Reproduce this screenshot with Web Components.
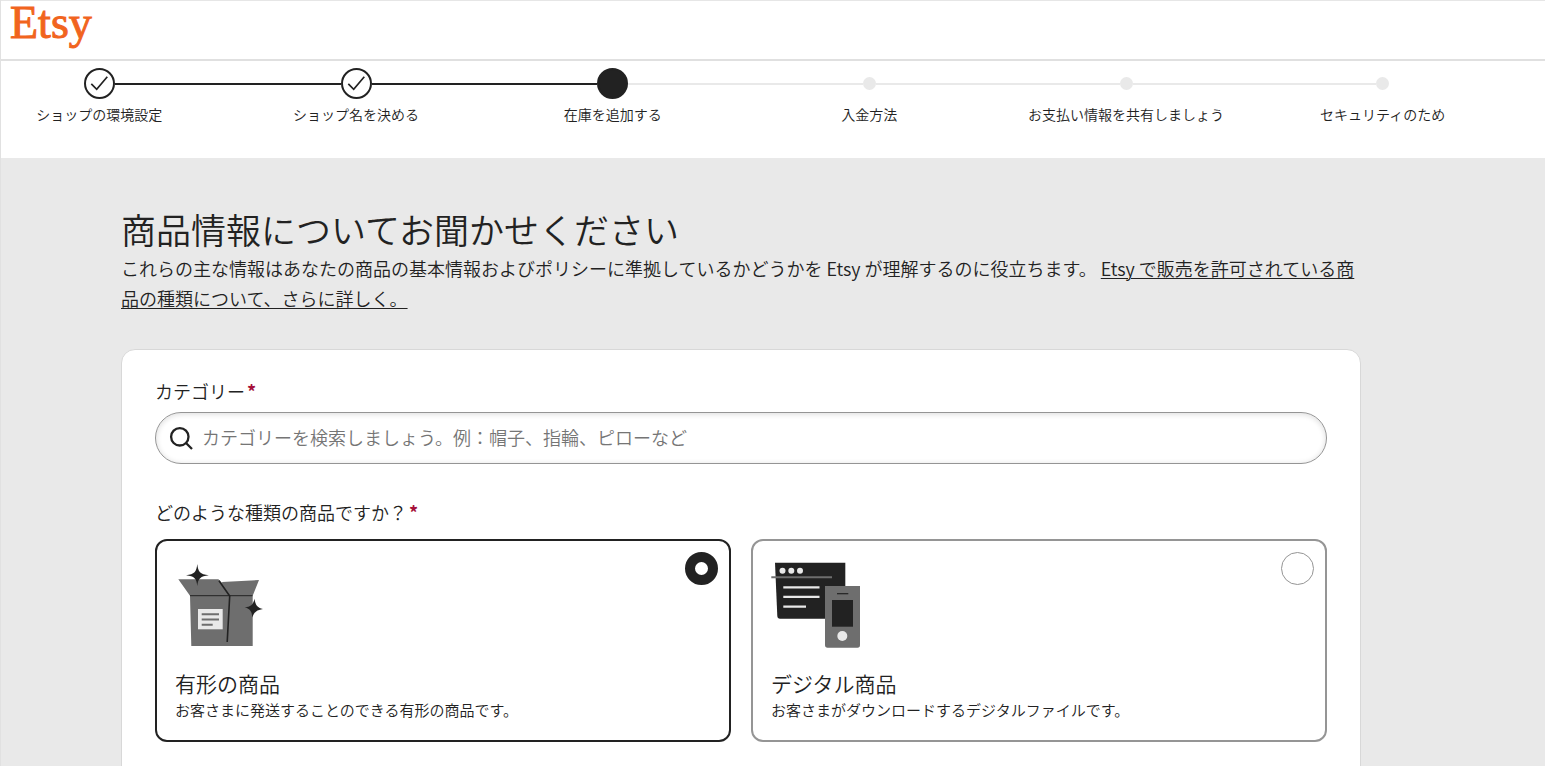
<!DOCTYPE html>
<html lang="ja">
<head>
<meta charset="utf-8">
<meta name="viewport" content="width=device-width, initial-scale=1">
<title>Etsy</title>
<style>
  html { height: 100%; }
  body {
    margin: 0;
    height: 100vh;
    box-sizing: border-box;
    overflow: hidden;
    border-left: 1px solid #e1e1e1;
    background: #e9e9e9;
    color: #222;
    font-family: "Noto Sans CJK JP", sans-serif;
    font-weight: 350;
  }
</style>
</head>
<body>
<shop-header></shop-header>
<progress-steps>
  <progress-step state="done">ショップの環境設定</progress-step>
  <progress-step state="done">ショップ名を決める</progress-step>
  <progress-step state="current">在庫を追加する</progress-step>
  <progress-step state="todo">入金方法</progress-step>
  <progress-step state="todo">お支払い情報を共有しましょう</progress-step>
  <progress-step state="todo">セキュリティのため</progress-step>
</progress-steps>
<listing-page>
  <span slot="title">商品情報についてお聞かせください</span>
  <category-search></category-search>
  <product-type-picker></product-type-picker>
</listing-page>

<script>
const define = (name, html) => {
  const template = document.createElement('template');
  template.innerHTML = html;
  customElements.define(name, class extends HTMLElement {
    constructor() {
      super();
      this.attachShadow({ mode: 'open' }).append(template.content.cloneNode(true));
    }
  });
};

define('shop-header', `
  <style>
    :host { display: block; background: #fff; border-top: 1px solid #e6e6e6; border-bottom: 2px solid #e0e0e0; }
    header { height: 58px; padding-left: 9px; }
    a { display: inline-block; color: #f1641e; font: 400 46px/44px "Liberation Serif", serif; -webkit-text-stroke: 1px #f1641e; text-decoration: none; }
  </style>
  <header><a href="#" aria-label="Etsy">Etsy</a></header>
`);

define('progress-steps', `
  <style>
    :host { display: block; background: #fff; overflow: hidden; }
    nav { display: grid; grid-template-columns: repeat(6, 1fr); margin: 0 34px 0 -30px; padding: 7px 0 32px; }
  </style>
  <nav aria-label="進行状況"><slot></slot></nav>
`);

define('progress-step', `
  <style>
    :host { display: block; text-align: center; }
    .track { display: flex; align-items: center; height: 31px; }
    .line { flex: 1; height: 2px; background: #e9e9e9; }
    .marker { box-sizing: border-box; width: 31px; height: 31px; border: 2px solid #222; border-radius: 50%; }
    svg { display: none; width: 27px; height: 27px; fill: none; stroke: #222; stroke-width: 1.700; }
    .label { padding-top: 3px; font-size: 14px; line-height: 24px; white-space: nowrap; }
    :host([state="done"]) svg { display: block; }
    :host([state="done"]) .line, :host([state="current"]) .before { background: #222; }
    :host([state="current"]) .marker { background: #222; }
    :host([state="todo"]) .marker { width: 13px; height: 13px; border: 0; background: #e9e9e9; }
    :host(:first-child) .before, :host(:last-child) .after { visibility: hidden; }
  </style>
  <div class="track">
    <div class="line before"></div>
    <div class="marker"><svg viewBox="0 0 27 27" aria-hidden="true"><path d="M5.300 13.800 L10.700 19.300 L21.300 6.800"/></svg></div>
    <div class="line after"></div>
  </div>
  <div class="label"><slot></slot></div>
`);

define('listing-page', `
  <style>
    :host { display: block; }
    main { margin: 0 184px 0 120px; padding-top: 47px; }
    h1 { margin: 0; font-size: 35px; line-height: 48px; font-weight: inherit; }
    p { margin: 0; font-size: 18px; line-height: 30px; }
    a { color: inherit; text-underline-offset: 2px; text-decoration-thickness: 1px; }
    .card { margin: 36px 0 48px; padding: 29px 33px 48px; background: #fff; border: 1px solid #d8d8d8; border-radius: 14px; }
  </style>
  <main>
    <h1><slot name="title"></slot></h1>
    <p>これらの主な情報はあなたの商品の基本情報およびポリシーに準拠しているかどうかを Etsy が理解するのに役立ちます。 <a href="#">Etsy で販売を許可されている商品の種類について、さらに詳しく。</a></p>
    <div class="card"><slot></slot></div>
  </main>
`);

define('category-search', `
  <style>
    :host { display: block; }
    label { display: block; font-size: 18px; line-height: 24px; }
    .star { color: #a5103a; font-weight: 700; margin-left: 2px; }
    .field {
      display: flex; align-items: center; box-sizing: border-box; height: 52px; margin-top: 9px; padding: 0 24px 0 13px;
      border: 1px solid #959595; border-radius: 26px; box-shadow: inset 0 1px 5px 1px #0000001c;
    }
    svg { flex: none; width: 24px; height: 24px; margin-right: 9px; fill: none; stroke: #222; stroke-width: 2.300; }
    input { flex: 1; min-width: 0; height: 48px; padding: 0 0 2px; box-sizing: border-box; border: 0; outline: 0; background: none; font: inherit; font-size: 18px; color: #222; }
    input::placeholder { color: #757575; opacity: 1; }
  </style>
  <label for="q">カテゴリー<span class="star">*</span></label>
  <div class="field">
    <svg viewBox="0 0 24 24" aria-hidden="true"><circle cx="10.800" cy="10.800" r="8.700"/><path d="M17 17 L23 23"/></svg>
    <input id="q" type="text" required placeholder="カテゴリーを検索しましょう。例：帽子、指輪、ピローなど">
  </div>
`);

define('box-picture', `
  <style>:host { display: block; } svg { display: block; width: 90px; height: 90px; }</style>
  <svg viewBox="0 0 90 90" aria-hidden="true">
    <path fill="#6e6e6e" d="M3.300 19.300H43.300L47 22L84 20L77.700 35.700V86H16.300L15 35.700Z"/>
    <path fill="#fff" d="M44 18.500L48 21.900L46 22.500Z"/>
    <path fill="none" stroke="#222" stroke-width="1" d="M15 35.700H77.500"/>
    <path fill="none" stroke="#222" stroke-width="1.600" d="M44 20.700L54.700 36L52.200 82"/>
    <path fill="#e9e9e9" d="M23 49H47.700V69.300H23Z"/>
    <path fill="none" stroke="#6e6e6e" stroke-width="2" d="M26.700 54.300H44M26.700 59.500H44M26.700 64.700H37.700"/>
    <path fill="#222" d="M22.300 4C23 11.500 25 14.500 33.800 15.200C25.500 16 23 18.500 22.300 26C21.500 18.500 19.500 16 11 15.200C19.500 14.500 21.500 11.500 22.300 4Z"/>
    <path fill="#222" d="M79.500 38.700C80.500 45 82 47.500 88 49C82 50 79.500 51.500 77.300 57.500C77 51.500 75 49 69.700 47C75.500 47 78 45 79.500 38.700Z"/>
  </svg>
`);

define('device-picture', `
  <style>:host { display: block; } svg { display: block; width: 91px; height: 90px; }</style>
  <svg viewBox="1 0 91 90" aria-hidden="true">
    <path fill="#222" d="M5 2.700H75.300V58.700H10Q7.500 58.700 7.300 56Z"/>
    <g fill="#e9e9e9"><circle cx="12.500" cy="10.700" r="3"/><circle cx="21.300" cy="10.700" r="3"/><circle cx="30" cy="10.700" r="3"/></g>
    <path fill="none" stroke="#6e6e6e" stroke-width="2" d="M1.300 17.300H62"/>
    <path fill="none" stroke="#e9e9e9" stroke-width="2.200" d="M13.300 27.300H49.500M13.300 36.800H49.500M13.300 46.600H36"/>
    <path fill="#6e6e6e" d="M55 26H90V85Q90 87.800 87.500 87.800H57.500Q55 87.800 55 85Z"/>
    <path fill="none" stroke="#222" stroke-width="1.200" d="M67 33.700H78.300"/>
    <path fill="#222" d="M62 40H83V66.700H62Z"/>
    <circle cx="72.300" cy="76" r="5" fill="#e9e9e9"/>
  </svg>
`);

define('product-type-picker', `
  <style>
    :host { display: block; margin-top: 36px; }
    fieldset { margin: 0; padding: 0; border: 0; min-width: 0; }
    legend { padding: 0; font-size: 18px; line-height: 24px; }
    .star { color: #a5103a; font-weight: 700; margin-left: 2px; }
    .options { display: grid; grid-template-columns: 1fr 1fr; gap: 20px; margin-top: 15px; }
    label { display: block; padding: 11px 11px 18px 18px; border: 2px solid #959595; border-radius: 12px; }
    label:has(:checked) { border-color: #222; }
    .top { display: flex; justify-content: space-between; align-items: flex-start; }
    box-picture, device-picture { margin-top: 8px; }
    input { appearance: none; box-sizing: border-box; width: 33px; height: 33px; margin: 0; border: 1px solid #959595; border-radius: 50%; background: #fff; }
    input:checked { border: 10px solid #222; }
    .name { display: block; margin-top: 18px; font-size: 21px; line-height: 30px; }
    .about { display: block; font-size: 15px; line-height: 24px; }
  </style>
  <fieldset>
    <legend>どのような種類の商品ですか？<span class="star">*</span></legend>
    <div class="options">
      <label>
        <span class="top"><box-picture></box-picture><input type="radio" name="kind" value="physical" checked></span>
        <span class="name">有形の商品</span>
        <span class="about">お客さまに発送することのできる有形の商品です。</span>
      </label>
      <label>
        <span class="top"><device-picture></device-picture><input type="radio" name="kind" value="digital"></span>
        <span class="name">デジタル商品</span>
        <span class="about">お客さまがダウンロードするデジタルファイルです。</span>
      </label>
    </div>
  </fieldset>
`);
</script>
</body>
</html>
